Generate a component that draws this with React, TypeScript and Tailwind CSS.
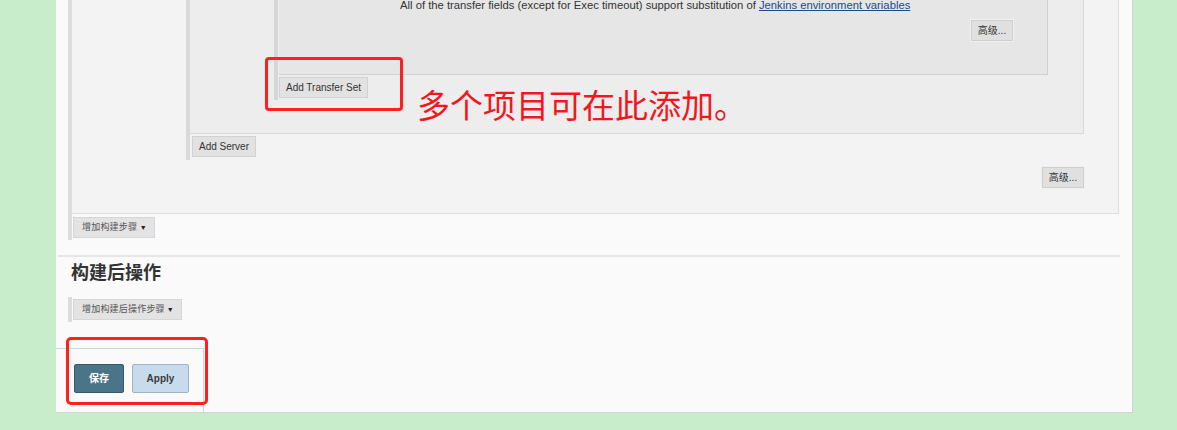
import React from 'react'

const sans = "font-['Liberation_Sans','Noto_Sans_CJK_SC',sans-serif]"

function GrayButton({ label, className = '' }: { label: string; className?: string }) {
  return (
    <button className={`h-[21px] bg-[#e2e2e2] border border-[#d2d2d2] text-[10px] text-[#333] leading-none whitespace-nowrap flex items-center justify-center ${className}`}>
      {label}
    </button>
  )
}

function AdvButton({ className = '' }: { className?: string }) {
  return (
    <button className={`w-[42px] h-[21px] bg-[#e0e0e0] border border-[#cfcfcf] outline outline-1 outline-[#f0f0f0] text-[10px] text-[#333] leading-none whitespace-nowrap flex items-center justify-center ${className}`}>
      高级...
    </button>
  )
}

function DropButton({ label, width }: { label: string; width: string }) {
  return (
    <button className={`h-[21px] ${width} bg-[#e3e3e3] border border-[#d6d6d6] text-[9px] tracking-[0.2px] text-[#555] leading-none whitespace-nowrap flex items-center justify-between pl-[8px] pr-[7px]`}>
      <span>{label}</span>
      <span className="text-[7px] text-[#222]">▼</span>
    </button>
  )
}

export default function App() {
  return (
    <div className={`relative h-[430px] w-[1177px] overflow-hidden bg-[#c7edca] ${sans}`}>
      <div className="ml-[56px] w-[1077px] h-[413px] bg-[#fafafa] border-r border-b border-[#d2d2d2] flex flex-col">

        {/* build step section */}
        <div className="ml-[12px] mr-[13px] flex h-[214px]">
          <div className="w-[4px] bg-[#dcdcdc]"></div>
          <div className="flex-1 bg-[#f3f3f3] border-r border-b border-[#dedede] flex flex-col pl-[114px]">

            {/* server block */}
            <div className="flex">
              <div className="w-[4px] bg-[#d9d9d9]"></div>
              <div className="flex-1 mr-[34px] flex flex-col">
                <div className="h-[134px] bg-[#ededed] border-r border-b border-[#d8d8d8] pl-[84px]">
                  <div className="flex">
                    <div className="w-[4px] h-[100px] bg-[#d6d6d6]"></div>
                    <div className="flex-1 ml-[1px] mr-[35px] flex flex-col">
                      <div className="h-[75px] bg-[#e6e6e6] border-r border-b border-[#d0d0d0] flex flex-col">
                        <p className="pl-[121px] text-[11.25px] leading-[11px] text-[#333] whitespace-nowrap">
                          All of the transfer fields (except for Exec timeout) support substitution of{' '}
                          <span className="text-[#204a87] underline">Jenkins environment variables</span>
                        </p>
                        <div className="flex justify-end mr-[34px] mt-[9px]">
                          <AdvButton />
                        </div>
                      </div>
                      <GrayButton label="Add Transfer Set" className="mt-[2px] w-[89px]" />
                    </div>
                  </div>
                </div>
                <GrayButton label="Add Server" className="mt-[2px] ml-[2px] w-[64px]" />
                <div className="h-[3px]"></div>
              </div>
            </div>

            <div className="flex justify-end mr-[34px] mt-[7px]">
              <AdvButton />
            </div>
          </div>
        </div>

        <div className="ml-[12px] flex h-[26px]">
          <div className="w-[4px] bg-[#dcdcdc]"></div>
          <div className="ml-[1px] mt-[3px]">
            <DropButton label="增加构建步骤" width="w-[82px]" />
          </div>
        </div>

        <div className="mt-[15px] ml-[2px] mr-[12px] border-t-2 border-[#e6e6e6]"></div>

        <h2 className="mt-[4px] ml-[15px] text-[18px] leading-[24px] font-bold text-[#333]">构建后操作</h2>

        <div className="mt-[12px] ml-[12px] flex h-[25px]">
          <div className="w-[4px] bg-[#dcdcdc]"></div>
          <div className="ml-[1px] mt-[2px]">
            <DropButton label="增加构建后操作步骤" width="w-[109px]" />
          </div>
        </div>

        <div className="mt-[26px] w-[148px] flex-1 border-t border-r border-[#c9d9d9] flex gap-[8px] pl-[18px] pt-[15px]">
          <button className="w-[50px] h-[29px] bg-[#4a7589] border border-[#34596b] rounded-[2px] text-white text-[10px] font-bold">保存</button>
          <button className="w-[57px] h-[29px] bg-[#c8dbed] border border-[#9db3c6] rounded-[2px] text-[#3a3a3a] text-[10px] font-bold">Apply</button>
        </div>
      </div>

      {/* annotations */}
      <div className="absolute left-[265px] top-[57px] w-[138px] h-[54px] border-[3px] border-[#ff1f1f] rounded-[4px]"></div>
      <div className="absolute left-[417px] top-[83px] text-[33px] leading-[42px] text-[#f0181e] font-['Noto_Sans_CJK_SC',sans-serif] whitespace-nowrap">多个项目可在此添加。</div>
      <div className="absolute left-[66px] top-[337px] w-[142px] h-[68px] border-[3px] border-[#ff1f1f] rounded-[5px]"></div>
    </div>
  )
}
